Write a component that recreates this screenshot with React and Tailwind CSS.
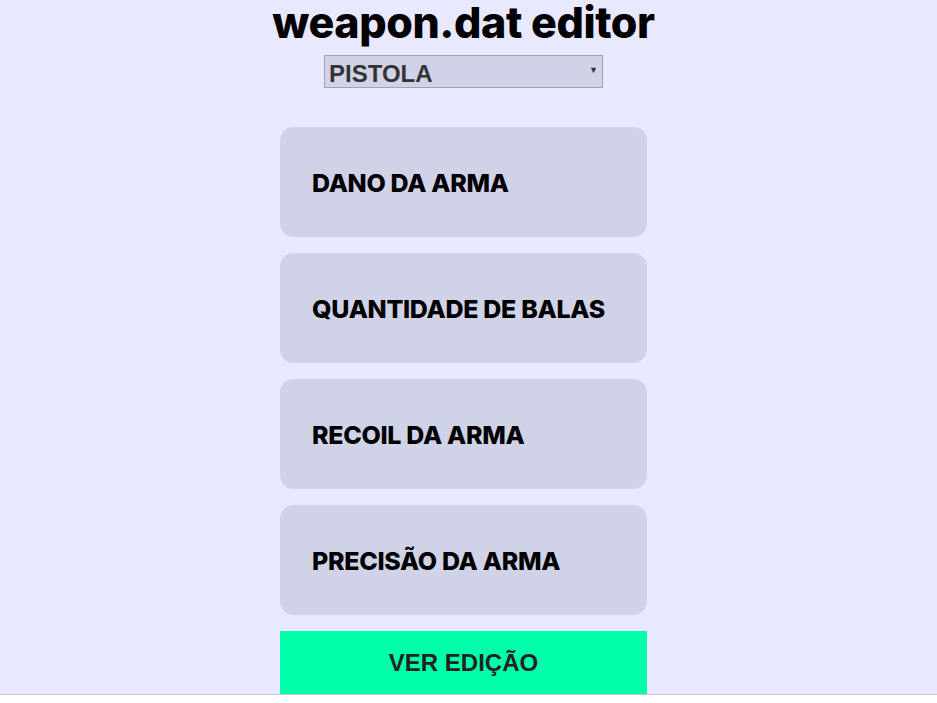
import { useState } from "react";

const campos = ["DANO DA ARMA", "QUANTIDADE DE BALAS", "RECOIL DA ARMA", "PRECISÃO DA ARMA"];

export default function App() {
  const [arma, setArma] = useState("PISTOLA");

  return (
    <div className="min-h-screen bg-white">
      <div className="h-[695px] overflow-hidden border-b border-[#c8c8c8] bg-[#e8e8fe]">
        <div className="flex flex-col items-center pr-[10px]">
          <h1 className="text-[43px] leading-[44px] font-extrabold tracking-[-0.4px] text-black [font-family:Inter,'Noto_Sans',sans-serif]">
            weapon.dat editor
          </h1>
          <div className="relative mt-[11px] h-[33px] w-[279px]">
            <select
              value={arma}
              onChange={(e) => setArma(e.target.value)}
              className="h-full w-full appearance-none border border-[#a3a3b0] bg-[#d0d3e8] pl-[4px] text-[24px] font-bold text-[#333] [font-family:'Liberation_Sans',Arial,sans-serif] outline-none"
            >
              <option>PISTOLA</option>
              <option>RIFLE</option>
              <option>SHOTGUN</option>
            </select>
            <span className="pointer-events-none absolute right-[5px] top-[8px] text-[9px] text-[#333]">▼</span>
          </div>

          <div className="mt-[39px] flex w-[367px] flex-col gap-4">
            {campos.map((c) => (
              <div
                key={c}
                className="flex h-[110px] items-center rounded-[14px] bg-[#d0d3e7] pl-[32px] pt-[3px] text-[25px] font-extrabold tracking-[-0.3px] text-black [font-family:Inter,'Noto_Sans',sans-serif]"
              >
                {c}
              </div>
            ))}
            <button className="h-[64px] w-full bg-[#00ffaa] pb-[1px] text-[24px] font-bold text-[#222] [font-family:'Liberation_Sans',Arial,sans-serif]">
              VER EDIÇÃO
            </button>
          </div>
        </div>
      </div>
    </div>
  );
}
